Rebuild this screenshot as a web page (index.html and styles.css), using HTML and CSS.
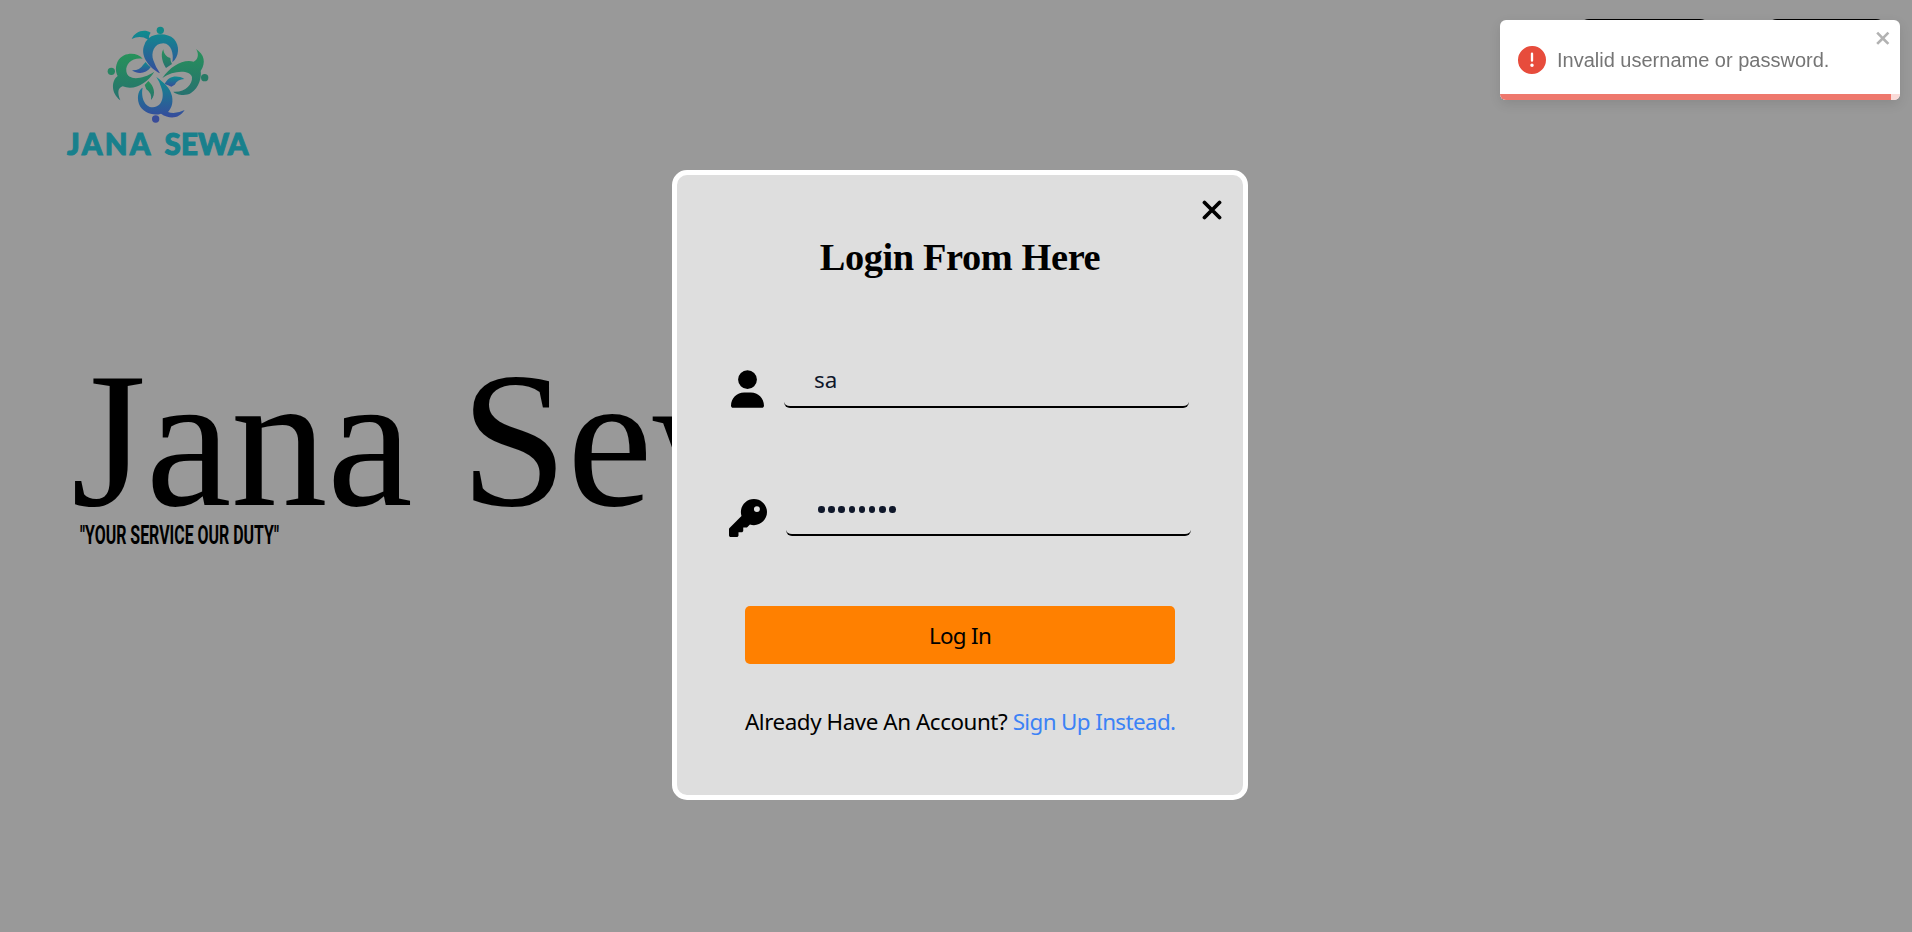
FILE: index.html
```html
<!DOCTYPE html>
<html lang="en">
<head>
<meta charset="utf-8">
<title>Jana Sewa</title>
<link rel="stylesheet" href="styles.css">
</head>
<body>
<div class="page">
  <header class="header">
    <svg class="logo" viewBox="0 0 200 150" role="img" aria-label="Jana Sewa">
      <defs>
        <linearGradient id="blue" x1="0" y1="0" x2="0" y2="1"><stop offset="0" stop-color="#0f8c8e"/><stop offset="1" stop-color="#364b9c"/></linearGradient>
        <linearGradient id="green" x1="0" y1="0" x2="0" y2="1"><stop offset="0" stop-color="#27925a"/><stop offset="1" stop-color="#26716f"/></linearGradient>
      </defs>
      <g transform="translate(40 10) scale(.33333)">
        <g fill="url(#blue)">
          <path d="M95 57C104 35 132 25 152 38C148 45 146 49 147 54C166 39 203 39 222 57C240 77 238 110 217 127C222 102 214 71 190 70C162 70 152 99 160 121Q166 140 180 160C151 145 122 113 131 80Q134 66 143 58C129 49 112 48 95 57Z"/>
          <path d="M96 151Q119 152 129 135L137 126Q144 136 152 142C139 161 114 164 96 151Z"/>
          <path d="M169 171C192 188 210 203 216 228C221 254 211 268 204 276Q225 284 254 270C238 296 209 299 183 281C160 289 127 278 117 252C109 226 118 207 128 203C122 228 132 262 159 262C189 259 193 225 184 203Q180 187 169 171Z"/>
          <path d="M194 192C205 168 231 164 253 177Q233 178 224 194L214 200Q205 196 194 192Z"/>
        </g>
        <g fill="url(#green)">
          <path d="M128 116C111 94 71 97 56 119C44 138 47 157 53 168C34 182 32 219 61 241C51 218 54 203 68 199C104 213 143 188 163 155C125 180 82 182 79 154C76 130 98 111 128 116Z"/>
          <path d="M190 88C179 105 190 133 198 144L216 132Q211 123 211 114C200 112 191 102 190 88Z"/>
          <path d="M187 174C213 139 247 117 281 125C297 117 296 99 288 87C313 103 319 128 302 153C305 170 298 204 273 219C256 230 227 224 220 215C255 218 278 194 276 171C270 150 221 150 187 174Z"/>
          <path d="M145 183C161 197 170 222 153 240Q156 219 139 208L134 195Z"/>
        </g>
        <circle cx="181" cy="31" r="11" fill="#128887"/>
        <circle cx="34" cy="154" r="11" fill="#298563"/>
        <circle cx="314" cy="173" r="11" fill="#277a65"/>
        <circle cx="167" cy="297" r="11" fill="#394c99"/>
      </g>
      <text class="logo-text" y="145"><tspan x="7" textLength="82.500" lengthAdjust="spacing">JANA</tspan> <tspan x="104.500" textLength="84" lengthAdjust="spacing">SEWA</tspan></text>
    </svg>
    <nav class="nav"><span class="nav-button nav-login"></span><span class="nav-button nav-signup"></span></nav>
  </header>
  <main class="hero">
    <h1 class="hero-title">Jana Sewa</h1>
    <svg class="tagline" viewBox="0 0 200 30"><text x="0" y="24" textLength="199" lengthAdjust="spacingAndGlyphs">"YOUR SERVICE OUR DUTY"</text></svg>
  </main>
</div>

<div class="overlay">
  <form class="modal">
    <svg class="modal-close" viewBox="0 0 20 20"><path d="M2.5 2.5l15 15M17.5 2.5l-15 15"/></svg>
    <h2 class="modal-title">Login From Here</h2>
    <div class="field">
      <svg class="icon icon-user" viewBox="0 0 448 512"><path d="M224 256a128 128 0 1 0 0-256 128 128 0 1 0 0 256zm-45.700 48C79.800 304 0 383.800 0 482.300 0 498.700 13.300 512 29.700 512h388.600c16.400 0 29.700-13.300 29.700-29.700C448 383.800 368.200 304 269.700 304z"/></svg>
      <div class="input">sa</div>
    </div>
    <div class="field field-password">
      <svg class="icon icon-key" viewBox="0 0 512 512"><path d="M336 352c97.200 0 176-78.800 176-176S433.200 0 336 0 160 78.800 160 176c0 18.700 2.900 36.800 8.300 53.700L7 391c-4.500 4.500-7 10.600-7 17v80c0 13.300 10.700 24 24 24h80c13.300 0 24-10.700 24-24v-40h40c13.300 0 24-10.700 24-24v-40h40c6.400 0 12.500-2.500 17-7l33.300-33.300c16.900 5.400 35 8.300 53.700 8.300zm40-256a40 40 0 1 1 0 80 40 40 0 1 1 0-80z"/></svg>
      <div class="input password"><i></i><i></i><i></i><i></i><i></i><i></i><i></i><i></i></div>
    </div>
    <button class="submit" type="button">Log In</button>
    <p class="switch"><span>Already Have An Account?</span> <a class="switch-link">Sign Up Instead.</a></p>
  </form>
</div>

<div class="toast">
  <svg class="toast-icon" viewBox="0 0 24 24"><path d="M11.983 0a12.206 12.206 0 00-8.510 3.653A11.800 11.800 0 000 12.207 11.779 11.779 0 0011.800 24h.214A12.111 12.111 0 0024 11.791 11.766 11.766 0 0011.983 0zM10.500 16.542a1.476 1.476 0 011.449-1.530h.027a1.527 1.527 0 011.523 1.470 1.475 1.475 0 01-1.449 1.530h-.027a1.529 1.529 0 01-1.523-1.470zM11 12.500v-6a1 1 0 012 0v6a1 1 0 11-2 0z"/></svg>
  <span class="toast-text">Invalid username or password.</span>
  <svg class="toast-close" viewBox="0 0 14 16"><path fill-rule="evenodd" d="M7.710 8.230l3.750 3.750-1.480 1.480-3.750-3.750-3.750 3.750L1 11.980l3.750-3.750L1 4.480 2.480 3l3.750 3.750L9.980 3l1.480 1.480-3.750 3.750z"/></svg>
  <div class="toast-progress"><div class="toast-bar"></div></div>
</div>
</body>
</html>
```
FILE: styles.css
```css
* { box-sizing: border-box; }
body { margin: 0; height: 932px; overflow: hidden; background: #999; color: #000; font-family: "Noto Sans", "Open Sans", sans-serif; }
h1, h2, p { margin: 0; font-weight: normal; }
.page { height: 932px; }
.header { display: flex; justify-content: space-between; align-items: flex-start; height: 180px; padding: 10px 24px 0 60px; }
.logo { width: 200px; height: 150px; }
.logo-text { font: 900 29.500px Lato, sans-serif; fill: #18808c; stroke: #18808c; stroke-width: 1px; }
.nav { display: flex; gap: 53px; padding-top: 9px; }
.nav-button { height: 56px; border-radius: 12px; background: #000; }
.nav-login { width: 135px; }
.nav-signup { width: 123px; }
.hero { padding: 180px 0 0 71px; }
.hero-title { font: 193px/160px "Liberation Serif", serif; letter-spacing: -.4px; white-space: nowrap; }
.tagline { display: block; width: 200px; height: 30px; margin: 0 0 0 9px; font: 700 25.500px Roboto, sans-serif; overflow: visible; }
.overlay { position: fixed; inset: 0; display: flex; justify-content: center; align-items: flex-start; padding: 170px 0 0 8px; }
.modal { position: relative; display: flex; flex-direction: column; width: 576px; height: 630px; padding: 56px 50px 0; border: 5px solid #fff; border-radius: 15px; background: #dedede; }
.modal-close { position: absolute; top: 25px; right: 21px; width: 20px; height: 20px; fill: none; stroke: #000; stroke-width: 3.800; stroke-linecap: round; }
.modal-title { font: bold 38.400px/52px "Liberation Serif", serif; letter-spacing: -.4px; text-align: center; }
.field { display: flex; align-items: flex-end; height: 38px; margin: 87px 0 0 4px; }
.field-password { margin: 90px 0 0 2px; }
.icon { flex: none; height: 38px; }
.icon-user { width: 33px; margin-right: 20px; }
.icon-key { width: 38px; margin: 0 19px -1px 0; }
.input { width: 405px; height: 56px; padding: 10px 30px; border-bottom: 2px solid #000; border-radius: 6px; font-size: 22.400px; line-height: 36px; color: #0f172a; }
.password { display: flex; gap: 3.700px; padding: 26px 32px; }
.password i { width: 6.500px; height: 6.500px; border-radius: 50%; background: #0f172a; }
.submit { height: 58px; margin: 70px 18px 0; padding: 0; border: 0; border-radius: 5px; background: #ff8000; color: #000; font: 22.400px "Noto Sans", sans-serif; letter-spacing: -.7px; }
.switch { margin: 42px 18px 0; font-size: 22.400px; line-height: 32px; letter-spacing: -.44px; white-space: nowrap; }
.switch-link { color: #3b82f6; letter-spacing: -.62px; }
.toast { position: fixed; top: 20px; right: 12px; display: flex; align-items: center; width: 400px; height: 80px; padding: 0 18px; border-radius: 6px; overflow: hidden; background: #fff; box-shadow: 0 4px 12px rgba(0, 0, 0, .1); color: #757575; font: 20px "Liberation Sans", sans-serif; }
.toast-icon { width: 28px; height: 28px; margin-right: 11px; fill: #e74c3c; }
.toast-close { position: absolute; top: 8px; right: 8px; width: 17.500px; height: 20px; fill: #b2b2b2; }
.toast-progress { position: absolute; left: 0; bottom: 0; width: 400px; height: 6px; background: #fadbd8; }
.toast-bar { width: 391px; height: 6px; background: #ee786d; }
```
